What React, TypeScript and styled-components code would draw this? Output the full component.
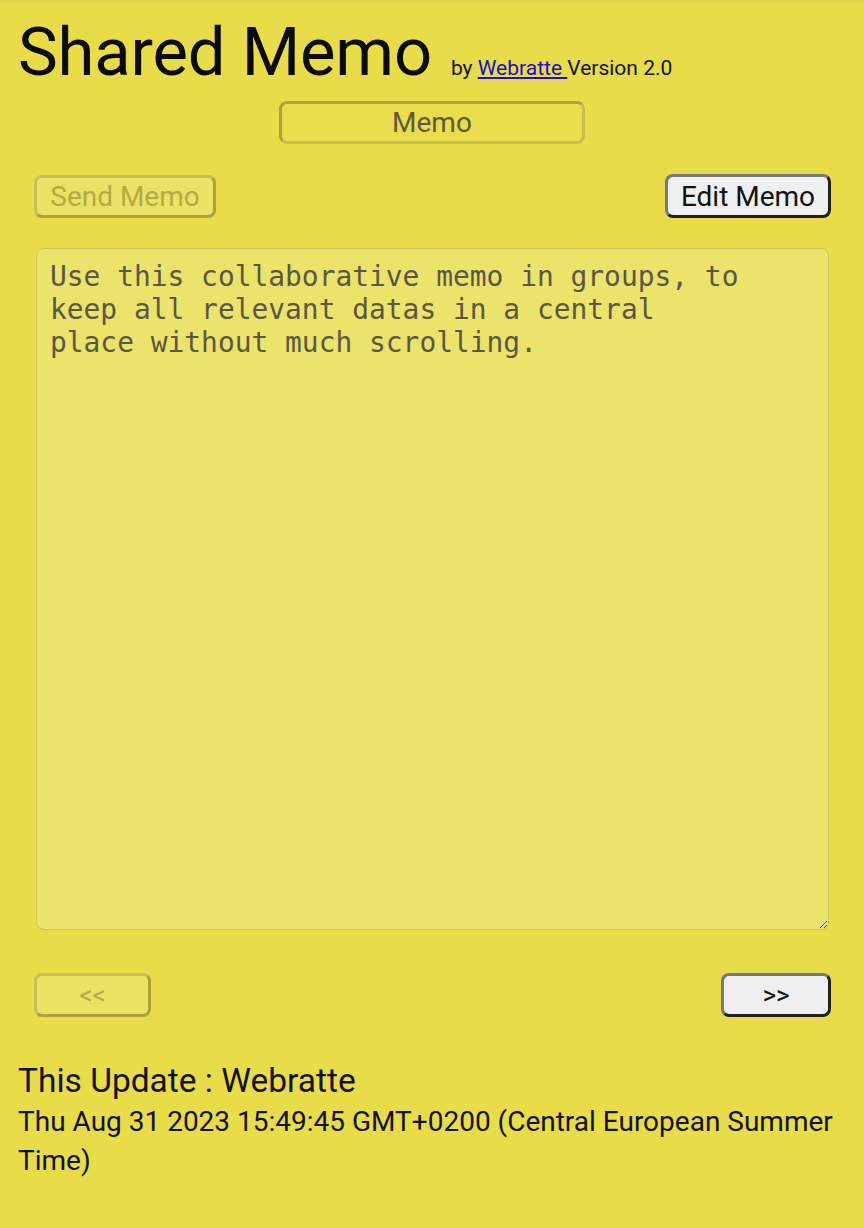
import React from "react";
import styled, { createGlobalStyle, css } from "styled-components";

const Global = createGlobalStyle`
  html, body { margin: 0; padding: 0; background: #e8dc48; }
  body { font-family: Roboto, "Liberation Sans", sans-serif; color: #111; }
  * { box-sizing: border-box; }
`;

const Page = styled.div`
  display: flex;
  flex-direction: column;
  min-height: 1228px;
  background: #e8dc48;
  border-top: 3px solid #e3d74a;
`;

const Header = styled.header`
  padding: 10px 18px 0 18px;
  display: flex;
  align-items: baseline;
  gap: 19px;
`;

const Title = styled.h1`
  margin: 0;
  font-size: 67px;
  font-weight: 400;
  line-height: 78px;
  color: #0a0a0a;
  letter-spacing: -0.2px;
`;

const Byline = styled.span`
  font-size: 21px;
  color: #111;
  a { color: #1a0dcc; }
`;

const CenterRow = styled.div`
  display: flex;
  justify-content: center;
  padding-top: 10px;
`;

const Button = styled.button<{ $variant: "active" | "disabled" | "label"; $w: number; $h: number; $fs: number }>`
  width: ${(p) => p.$w}px;
  height: ${(p) => p.$h}px;
  font-family: Roboto, "Liberation Sans", sans-serif;
  font-size: ${(p) => p.$fs}px;
  border-radius: 8px;
  border-width: 3px;
  border-style: solid;
  padding: 0;
  display: flex;
  align-items: center;
  justify-content: center;
  ${(p) =>
    p.$variant === "active"
      ? css`
          background: #efefef;
          color: #111;
          border-color: #777 #222 #222 #777;
        `
      : p.$variant === "disabled"
      ? css`
          background: #ebe265;
          color: #b4aa45;
          border-color: #c9bf55 #aca13a #aca13a #c9bf55;
        `
      : css`
          background: #e9dd4c;
          color: #5d5a3c;
          border-color: #aea43a #c8be50 #c8be50 #aea43a;
        `}
`;

const ButtonRow = styled.div<{ $top: number }>`
  display: flex;
  justify-content: space-between;
  align-items: center;
  padding: ${(p) => p.$top}px 33px 0 34px;
`;

const MemoArea = styled.textarea`
  display: block;
  margin: 30px 35px 0 36px;
  width: 793px;
  height: 682px;
  background: #ebe36a;
  border: 1px solid #cfc75e;
  border-radius: 8px;
  padding: 11px 13px;
  font-family: "DejaVu Sans Mono", monospace;
  font-size: 27.9px;
  line-height: 33px;
  color: #5a5747;
  outline: none;
  white-space: pre-wrap;
`;

const Footer = styled.footer`
  padding: 44px 18px 0 18px;
`;

const UpdateLine = styled.div`
  font-size: 33.5px;
  line-height: 40px;
  color: #111;
`;

const DateLine = styled.div`
  font-size: 28px;
  line-height: 39px;
  color: #111;
  margin-top: 1px;
`;

const memoText =
  "Use this collaborative memo in groups, to\nkeep all relevant datas in a central\nplace without much scrolling.";

export default function App() {
  return (
    <>
      <Global />
      <Page>
        <Header>
          <Title>Shared Memo</Title>
          <Byline>
            by <a href="#">Webratte </a>Version 2.0
          </Byline>
        </Header>
        <CenterRow>
          <Button $variant="label" $w={306} $h={43} $fs={28}>
            Memo
          </Button>
        </CenterRow>
        <ButtonRow $top={30}>
          <Button $variant="disabled" $w={182} $h={43} $fs={28} disabled>
            Send Memo
          </Button>
          <Button $variant="active" $w={166} $h={44} $fs={28}>
            Edit Memo
          </Button>
        </ButtonRow>
        <MemoArea readOnly defaultValue={memoText} />
        <ButtonRow $top={43}>
          <Button $variant="disabled" $w={117} $h={44} $fs={26} disabled>
            &lt;&lt;
          </Button>
          <Button $variant="active" $w={110} $h={44} $fs={26}>
            &gt;&gt;
          </Button>
        </ButtonRow>
        <Footer>
          <UpdateLine>This Update : Webratte</UpdateLine>
          <DateLine>Thu Aug 31 2023 15:49:45 GMT+0200 (Central European Summer Time)</DateLine>
        </Footer>
      </Page>
    </>
  );
}
